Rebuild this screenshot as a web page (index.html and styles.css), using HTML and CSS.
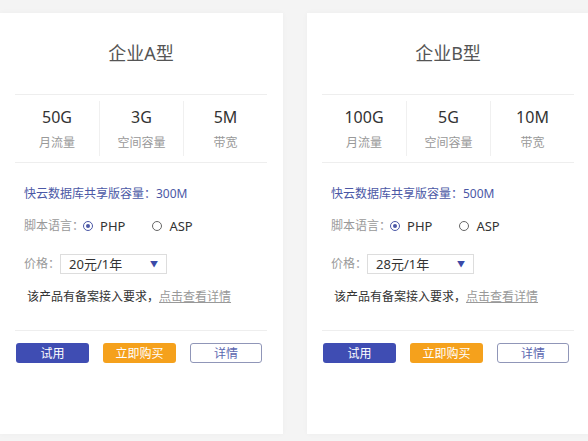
FILE: index.html
```html
<!DOCTYPE html>
<html lang="zh-CN">
<head>
    <meta charset="UTF-8">
    <meta name="viewport" content="width=device-width, initial-scale=1.0">
    <title>企业云主机</title>
    <link rel="stylesheet" href="styles.css">
</head>
<body>
    <div class="plans">
        <div class="plan">
            <h2 class="plan-title">企业A型</h2>
            <div class="stats">
                <div class="stat"><span class="stat-value">50G</span><span class="stat-label">月流量</span></div>
                <div class="stat"><span class="stat-value">3G</span><span class="stat-label">空间容量</span></div>
                <div class="stat"><span class="stat-value">5M</span><span class="stat-label">带宽</span></div>
            </div>
            <div class="info">
                <div class="row db">快云数据库共享版容量：300M</div>
                <div class="row">
                    <span class="label">脚本语言：</span>
                    <span class="radio checked"></span><span class="opt">PHP</span>
                    <span class="radio"></span><span class="opt">ASP</span>
                </div>
                <div class="row price">
                    <span class="label">价格：</span>
                    <div class="select"><span>20元/1年</span><span class="arrow">▼</span></div>
                </div>
                <div class="row notice">该产品有备案接入要求，<a href="#">点击查看详情</a></div>
            </div>
            <div class="actions">
                <button class="btn btn-try">试用</button>
                <button class="btn btn-buy">立即购买</button>
                <button class="btn btn-more">详情</button>
            </div>
        </div>

        <div class="plan">
            <h2 class="plan-title">企业B型</h2>
            <div class="stats">
                <div class="stat"><span class="stat-value">100G</span><span class="stat-label">月流量</span></div>
                <div class="stat"><span class="stat-value">5G</span><span class="stat-label">空间容量</span></div>
                <div class="stat"><span class="stat-value">10M</span><span class="stat-label">带宽</span></div>
            </div>
            <div class="info">
                <div class="row db">快云数据库共享版容量：500M</div>
                <div class="row">
                    <span class="label">脚本语言：</span>
                    <span class="radio checked"></span><span class="opt">PHP</span>
                    <span class="radio"></span><span class="opt">ASP</span>
                </div>
                <div class="row price">
                    <span class="label">价格：</span>
                    <div class="select"><span>28元/1年</span><span class="arrow">▼</span></div>
                </div>
                <div class="row notice">该产品有备案接入要求，<a href="#">点击查看详情</a></div>
            </div>
            <div class="actions">
                <button class="btn btn-try">试用</button>
                <button class="btn btn-buy">立即购买</button>
                <button class="btn btn-more">详情</button>
            </div>
        </div>
    </div>
</body>
</html>
```

FILE: styles.css
```css
body {
    margin: 0;
    font-family: "Noto Sans", "Noto Sans CJK SC", sans-serif;
    background: #f4f4f4;
    color: #333;
}
.plans {
    display: flex;
    gap: 24px;
    padding-top: 13px;
    height: 441px;
    box-sizing: border-box;
    overflow: hidden;
}
.plan {
    flex: 0 0 283px;
    height: 421px;
    box-sizing: border-box;
    background: #ffffff;
    padding: 0 16px 0 15px;
    box-shadow: 0 0 6px rgba(0, 0, 0, 0.03);
}
.plan-title {
    margin: 0;
    line-height: 81px;
    font-size: 18px;
    font-weight: normal;
    color: #555;
    text-align: center;
    border-bottom: 1px solid #eeeeee;
}
.stats {
    display: grid;
    grid-template-columns: repeat(3, 1fr);
    padding: 6px 0;
    border-bottom: 1px solid #eeeeee;
}
.stat {
    display: flex;
    flex-direction: column;
    align-items: center;
    padding: 5px 0 3px;
}
.stat + .stat {
    border-left: 1px solid #f0f0f0;
}
.stat-value {
    font-size: 16px;
    line-height: 22px;
    color: #333;
}
.stat-label {
    margin-top: 5px;
    font-size: 12px;
    line-height: 20px;
    color: #999;
}
.info {
    padding: 21px 0 23px 9px;
    border-bottom: 1px solid #eeeeee;
    font-size: 12px;
}
.row {
    display: flex;
    align-items: center;
    line-height: 20px;
}
.row + .row {
    margin-top: 12px;
}
.row.price {
    margin-top: 18px;
}
.row.notice {
    margin-top: 13px;
    padding-left: 3px;
}
.db {
    color: #4b58a6;
}
.label {
    color: #999;
}
.radio {
    width: 8px;
    height: 8px;
    border: 1px solid #666;
    border-radius: 50%;
    margin-left: -1px;
    position: relative;
}
.radio.checked {
    border-color: #4b58a6;
}
.radio.checked::after {
    content: "";
    position: absolute;
    left: 2px;
    top: 2px;
    width: 4px;
    height: 4px;
    border-radius: 50%;
    background: #4b58a6;
}
.opt {
    margin-left: 7px;
    margin-right: 28px;
    font-size: 13px;
    color: #333;
}
.select {
    display: flex;
    align-items: center;
    justify-content: space-between;
    width: 107px;
    height: 20px;
    box-sizing: border-box;
    border: 1px solid #dddddd;
    padding: 0 8px;
    font-size: 13px;
    color: #333;
}
.arrow {
    font-size: 8px;
    color: #3b4aa8;
}
.notice a {
    color: #999;
    text-decoration: underline;
}
.actions {
    display: flex;
    gap: 14px;
    padding: 12px 0 0 1px;
}
.btn {
    width: 73px;
    height: 20px;
    border: none;
    border-radius: 3px;
    font-family: inherit;
    font-size: 12px;
    color: #ffffff;
    padding: 0;
    cursor: pointer;
}
.btn-try {
    background: #3f4db3;
}
.btn-buy {
    background: #f5a11c;
}
.btn-more {
    width: 72px;
    background: #ffffff;
    border: 1px solid #9096b8;
    color: #5c67b0;
}
```
